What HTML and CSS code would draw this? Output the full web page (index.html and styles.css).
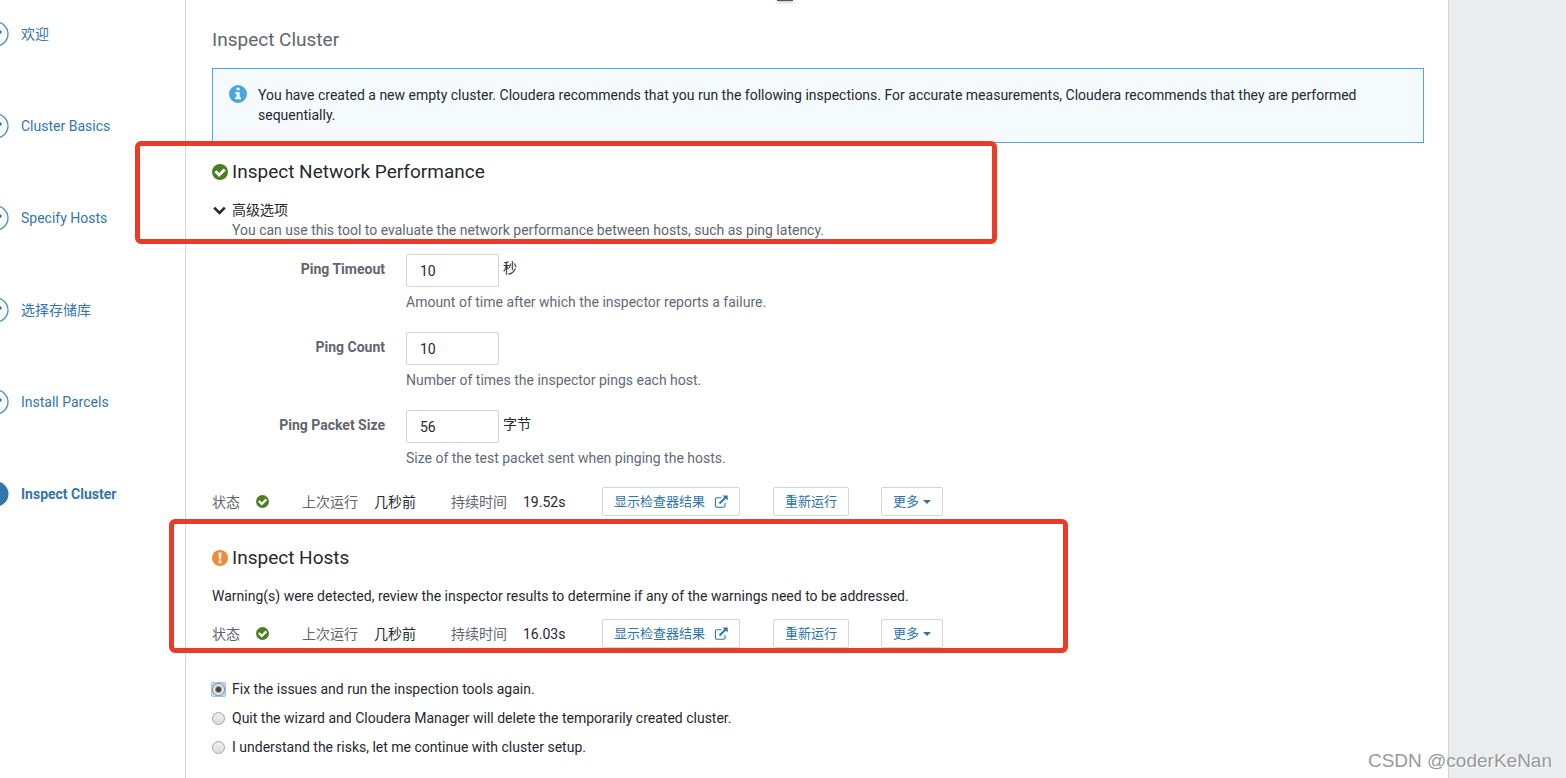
FILE: index.html
```html
<!DOCTYPE html>
<html lang="zh-CN">
<head>
    <meta charset="UTF-8">
    <meta name="viewport" content="width=device-width, initial-scale=1.0">
    <title>Inspect Cluster</title>
    <link rel="stylesheet" href="styles.css">
</head>
<body>

    <!-- Shared icons -->
    <svg class="icon-defs" aria-hidden="true">
        <symbol id="icon-check" viewBox="0 0 16 16">
            <circle cx="8" cy="8" r="8" fill="#4c7f23"/>
            <path d="M3.4 7.300l3.700 3.700 5.600-5.600" fill="none" stroke="#fff" stroke-width="2.800"/>
        </symbol>
        <symbol id="icon-warning" viewBox="0 0 16 16">
            <circle cx="8" cy="8" r="8" fill="#f08a35"/>
            <path d="M6.500 2.400h3l-.4 6.800H6.900zM6.600 10.400h2.800v2.800H6.600z" fill="#fff"/>
        </symbol>
        <symbol id="icon-external" viewBox="0 0 14 14">
            <path d="M7.5 2.7H3a1.6 1.6 0 0 0-1.6 1.6v6.4A1.6 1.6 0 0 0 3 12.3h6.4a1.6 1.6 0 0 0 1.6-1.6V8" fill="none" stroke="currentColor" stroke-width="1.1"/>
            <path d="M5.5 8.5L11.5 2.5" stroke="currentColor" stroke-width="1.9"/>
            <path d="M8.6.5H13.700V5.600z" fill="currentColor"/>
        </symbol>
        <symbol id="icon-step" viewBox="0 0 26 26">
            <circle cx="13" cy="13" r="12" fill="#f8fcff" stroke="#3f87b8" stroke-width="1.2"/>
            <path d="M7.5 13l4 4 6.500-7" fill="none" stroke="#2f74a9" stroke-width="3"/>
        </symbol>
    </svg>

    <div class="page">
        <nav class="sidebar">
            <ul class="steps">
                <li><a href="#"><svg class="step-icon"><use href="#icon-step"/></svg>欢迎</a></li>
                <li><a href="#"><svg class="step-icon"><use href="#icon-step"/></svg>Cluster Basics</a></li>
                <li><a href="#"><svg class="step-icon"><use href="#icon-step"/></svg>Specify Hosts</a></li>
                <li><a href="#"><svg class="step-icon"><use href="#icon-step"/></svg>选择存储库</a></li>
                <li><a href="#"><svg class="step-icon"><use href="#icon-step"/></svg>Install Parcels</a></li>
                <li class="active"><a href="#"><svg class="step-icon" viewBox="0 0 26 26"><circle cx="13" cy="13" r="12.5" fill="#3276ad"/></svg>Inspect Cluster</a></li>
            </ul>
        </nav>

        <main class="content">
            <h1>Inspect Cluster</h1>

            <div class="alert">
                <svg class="alert-icon" viewBox="0 0 18 18">
                    <circle cx="9" cy="9" r="9" fill="#4aa5de"/>
                    <path d="M7.6 2.8h3v2.5h-3zM6.3 7h4.3v5.3h1.3v2H6.1v-2h1.4V9H6.3z" fill="#fff"/>
                </svg>
                <p>You have created a new empty cluster. Cloudera recommends that you run the following inspections. For accurate measurements, Cloudera recommends that they are performed sequentially.</p>
            </div>

            <!-- Network performance -->
            <section class="network">
                <div class="mark mark-network"></div>
                <h2><svg class="title-icon"><use href="#icon-check"/></svg>Inspect Network Performance</h2>
                <button type="button" class="toggle">
                    <svg class="chevron" viewBox="0 0 16 16"><path d="M2.2 5.700l5.300 5.300 5.300-5.300" fill="none" stroke="currentColor" stroke-width="2.600"/></svg>高级选项
                </button>
                <p class="description">You can use this tool to evaluate the network performance between hosts, such as ping latency.</p>

                <form class="options">
                    <div class="field">
                        <label for="ping-timeout">Ping Timeout</label>
                        <div class="control"><input type="text" id="ping-timeout" value="10"><span>秒</span></div>
                        <p class="help">Amount of time after which the inspector reports a failure.</p>
                    </div>
                    <div class="field">
                        <label for="ping-count">Ping Count</label>
                        <div class="control"><input type="text" id="ping-count" value="10"></div>
                        <p class="help">Number of times the inspector pings each host.</p>
                    </div>
                    <div class="field">
                        <label for="ping-size">Ping Packet Size</label>
                        <div class="control"><input type="text" id="ping-size" value="56"><span>字节</span></div>
                        <p class="help">Size of the test packet sent when pinging the hosts.</p>
                    </div>
                </form>

                <div class="status">
                    <div class="stat"><span class="name">状态</span><svg class="status-icon"><use href="#icon-check"/></svg></div>
                    <div class="stat"><span class="name">上次运行</span><span>几秒前</span></div>
                    <div class="stat"><span class="name">持续时间</span><span>19.52s</span></div>
                    <button type="button" class="btn">显示检查器结果<svg class="external"><use href="#icon-external"/></svg></button>
                    <button type="button" class="btn">重新运行</button>
                    <button type="button" class="btn">更多<span class="caret"></span></button>
                </div>
            </section>

            <!-- Hosts -->
            <section class="hosts">
                <div class="mark mark-hosts"></div>
                <h2><svg class="title-icon"><use href="#icon-warning"/></svg>Inspect Hosts</h2>
                <p class="message">Warning(s) were detected, review the inspector results to determine if any of the warnings need to be addressed.</p>
                <div class="status">
                    <div class="stat"><span class="name">状态</span><svg class="status-icon"><use href="#icon-check"/></svg></div>
                    <div class="stat"><span class="name">上次运行</span><span>几秒前</span></div>
                    <div class="stat"><span class="name">持续时间</span><span>16.03s</span></div>
                    <button type="button" class="btn">显示检查器结果<svg class="external"><use href="#icon-external"/></svg></button>
                    <button type="button" class="btn">重新运行</button>
                    <button type="button" class="btn">更多<span class="caret"></span></button>
                </div>
            </section>

            <!-- Next action -->
            <div class="choices">
                <label><input type="radio" name="next" checked>Fix the issues and run the inspection tools again.</label>
                <label><input type="radio" name="next">Quit the wizard and Cloudera Manager will delete the temporarily created cluster.</label>
                <label><input type="radio" name="next">I understand the risks, let me continue with cluster setup.</label>
            </div>
        </main>
    </div>

    <div class="handle"></div>
    <div class="watermark">CSDN @coderKeNan</div>

</body>
</html>
```

FILE: styles.css
```css
* {
    margin: 0;
    padding: 0;
    box-sizing: border-box;
}

body {
    font-family: Roboto, "Noto Sans CJK SC", sans-serif;
    font-size: 14px;
    line-height: 20px;
    color: #25292d;
    background-color: #e9edf0;
}

button,
input {
    font-family: inherit;
    font-size: inherit;
    line-height: inherit;
    color: inherit;
}

.icon-defs {
    position: absolute;
    width: 0;
    height: 0;
}

.page {
    display: flex;
    min-height: 100vh;
    margin-right: 117px;
    background-color: #fff;
    border-right: 1px solid #d3d7da;
}

/* Wizard steps */
.sidebar {
    flex: 0 0 186px;
    padding-top: 21px;
    border-right: 1px solid #d3d5d7;
}

.steps {
    display: grid;
    gap: 66px;
    margin-left: -17px;
    list-style: none;
}

.steps a {
    display: flex;
    align-items: center;
    gap: 12px;
    height: 26px;
    color: #3276ad;
    text-decoration: none;
}

.steps .active {
    font-weight: bold;
}

.step-icon {
    width: 26px;
    height: 26px;
}

/* Main column */
.content {
    flex: 1;
    padding: 28px 24px 20px 26px;
}

h1 {
    margin-bottom: 16px;
    font-size: 19px;
    font-weight: normal;
    line-height: 24px;
    color: #5f666d;
}

h2 {
    display: flex;
    align-items: center;
    gap: 4px;
    font-size: 19px;
    font-weight: normal;
    line-height: 24px;
}

.title-icon {
    width: 16px;
    height: 16px;
}

.alert {
    display: flex;
    gap: 11px;
    padding: 16px 28px 17px 16px;
    background-color: #f5fafd;
    border: 1px solid #4aa8dc;
}

.alert-icon {
    flex: none;
    width: 18px;
    height: 18px;
}

.network {
    position: relative;
    padding-top: 17px;
}

.toggle {
    display: flex;
    align-items: center;
    gap: 4px;
    margin-top: 16px;
    background: none;
    border: none;
    cursor: pointer;
}

.chevron {
    width: 16px;
    height: 16px;
}

.description {
    padding-left: 20px;
    color: #5f666d;
}

/* Advanced options */
.options {
    display: grid;
    gap: 20px;
    margin-top: 14px;
}

.field {
    display: grid;
    grid-template-columns: 173px 1fr;
    gap: 5px 21px;
}

.field label {
    padding-top: 5px;
    font-weight: bold;
    text-align: right;
    color: #5f666d;
}

.control {
    display: flex;
    gap: 4px;
}

.control input {
    width: 93px;
    height: 33px;
    padding: 0 13px;
    border: 1px solid #d3d5d8;
    border-radius: 2px;
}

.control span {
    padding-top: 4px;
}

.help {
    grid-column: 2;
    color: #5f6b76;
}

/* Inspection status */
.status {
    display: grid;
    grid-template-columns: 90px 149px 151px 171px 108px auto;
    justify-content: start;
    align-items: center;
    justify-items: start;
    margin-top: 19px;
}

.stat {
    display: flex;
    align-items: center;
    gap: 16px;
}

.stat .name {
    color: #5f666d;
}

.status-icon {
    width: 13px;
    height: 13px;
}

.btn {
    display: flex;
    align-items: center;
    height: 29px;
    padding: 0 11px;
    font-size: 13px;
    color: #2a74ac;
    background-color: #fff;
    border: 1px solid #d3d7db;
    border-radius: 2px;
    cursor: pointer;
}

.external {
    width: 14px;
    height: 14px;
    margin-left: 9px;
}

.caret {
    margin-left: 4px;
    border-top: 4px solid currentColor;
    border-right: 4px solid transparent;
    border-left: 4px solid transparent;
}

.hosts {
    position: relative;
    padding-top: 30px;
}

.message {
    margin-top: 16px;
}

.hosts .status {
    margin-top: 13px;
}

/* Red highlight frames */
.mark {
    position: absolute;
    height: 103px;
    border: 5px solid #ea3b29;
    border-radius: 6px;
    pointer-events: none;
}

.mark-network {
    top: -2px;
    left: -77px;
    width: 862px;
}

.mark-hosts {
    top: 3px;
    left: -43px;
    width: 899px;
    height: 134px;
}

/* Radio choices */
.choices {
    display: grid;
    justify-items: start;
    gap: 9px;
    margin-top: 31px;
}

.choices label {
    display: flex;
    align-items: center;
    gap: 7px;
}

.choices input {
    appearance: none;
    width: 13px;
    height: 13px;
    background: linear-gradient(#eee, #ddd);
    border: 1px solid #a6a6a6;
    border-radius: 50%;
}

.choices input:checked {
    background: radial-gradient(circle, #444 2px, #e6e6e6 4px, #e6e6e6 5px, #8e9299 6px, #c3d8f8 7px);
    border: none;
    border-radius: 1px;
    box-shadow: 0 0 0 1px #a0c0f5;
}

/* Edge of the drag handle at the top of the window */
.handle {
    position: absolute;
    top: 0;
    left: 777px;
    width: 16px;
    height: 1px;
    background-color: #555;
    box-shadow: 0 1px 3px #777;
}

.watermark {
    position: absolute;
    right: 14px;
    bottom: 5px;
    font-family: "Liberation Sans", sans-serif;
    font-size: 19px;
    line-height: 24px;
    color: #999;
    text-shadow: 1px 1px 0 #fff;
}
```
